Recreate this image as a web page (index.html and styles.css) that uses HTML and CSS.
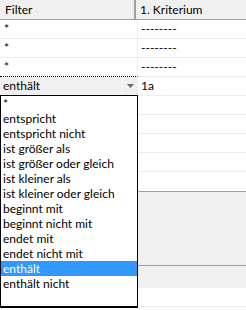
FILE: index.html
```html
<!DOCTYPE html>
<html lang="de">

<head>
  <meta charset="UTF-8">
  <title>Filter — Kriterium</title>
  <link rel="stylesheet" href="styles.css">
</head>

<body>
  <div class="sheet">
    <div class="head">
      <div class="c1">Filter</div>
      <div class="c2">1. Kriterium</div>
    </div>

    <div class="row"><div class="c1">*</div><div class="c2">--------</div></div>
    <div class="row"><div class="c1">*</div><div class="c2">--------</div></div>
    <div class="row row--above-edit"><div class="c1">*</div><div class="c2">--------</div></div>

    <div class="row row--edit">
      <div class="c1 combo">
        <span class="combo__value">enthält</span>
        <span class="combo__btn">
          <svg width="7" height="4" viewBox="0 0 7 4"><path d="M0 0 H7 L3.5 4 Z" fill="#6d6d6d"></path></svg>
        </span>
      </div>
      <div class="c2">1a</div>
    </div>

    <div class="row"><div class="c1"></div><div class="c2"></div></div>
    <div class="row"><div class="c1"></div><div class="c2"></div></div>
    <div class="row"><div class="c1"></div><div class="c2"></div></div>
    <div class="row"><div class="c1"></div><div class="c2"></div></div>
    <div class="row row--last"><div class="c1"></div><div class="c2"></div></div>

    <div class="pane"></div>
    <div class="pane pane--small"></div>
    <div class="blank-row"></div>

    <ul class="list">
      <li>*</li>
      <li>entspricht</li>
      <li>entspricht nicht</li>
      <li>ist größer als</li>
      <li>ist größer oder gleich</li>
      <li>ist kleiner als</li>
      <li>ist kleiner oder gleich</li>
      <li>beginnt mit</li>
      <li>beginnt nicht mit</li>
      <li>endet mit</li>
      <li>endet nicht mit</li>
      <li class="selected">enthält</li>
      <li>enthält nicht</li>
    </ul>
  </div>
</body>

</html>
```

FILE: styles.css
```css
body {
  margin: 0;
  background: #fff;
  color: #000;
  font-family: Lato, "Liberation Sans", sans-serif;
  font-size: 12px;
}

.sheet {
  position: relative;
  width: 246px;
  height: 310px;
  overflow: hidden;
}

.head {
  display: flex;
  height: 19px;
  background: #f0f0f0;
  border-bottom: 1px solid #a0a0a0;
  line-height: 19px;
}

.head .c1 {
  width: 136px;
  padding-left: 5px;
  box-sizing: border-box;
  border-right: 2px solid #a0a0a0;
}

.head .c2 {
  flex: 1;
  padding-left: 4px;
}

.row {
  display: flex;
  height: 19px;
  line-height: 18px;
}

.row .c1,
.row .c2 {
  border-bottom: 1px solid #ececec;
}

.row .c1 {
  width: 138px;
  box-sizing: border-box;
  padding-left: 4px;
  border-right: 1px solid #ececec;
}

.row .c2 {
  flex: 1;
  padding-left: 3px;
}

.row--above-edit .c1 {
  border-bottom: 1px dotted #000;
}

.row--last .c1,
.row--last .c2 {
  border-bottom: 0;
}

.combo {
  display: flex;
  background: #f0f0f0;
  padding-left: 3px;
}

.row .combo {
  padding-left: 3px;
}

.combo__value {
  flex: 1;
}

.combo__btn {
  display: flex;
  align-items: center;
  justify-content: center;
  width: 14px;
  border-left: 1px solid #f8f8f8;
}

.pane {
  height: 73px;
  background: #f0f0f0;
  border-top: 1px solid #a0a0a0;
}

.pane--small {
  height: 22px;
}

.blank-row {
  height: 18px;
  border-bottom: 1px solid #ececec;
}

.list {
  position: absolute;
  top: 95px;
  left: 0;
  width: 138px;
  height: 213px;
  box-sizing: border-box;
  margin: 0;
  padding: 0;
  list-style: none;
  background: #fff;
  border: 1px solid #000;
  border-bottom-width: 2px;
}

.list li {
  height: 15px;
  line-height: 15px;
  padding-left: 2px;
  white-space: nowrap;
}

.list .selected {
  background: #3399ff;
  color: #fff;
  outline: 1px dotted #c86a1e;
  outline-offset: -1px;
}
```
